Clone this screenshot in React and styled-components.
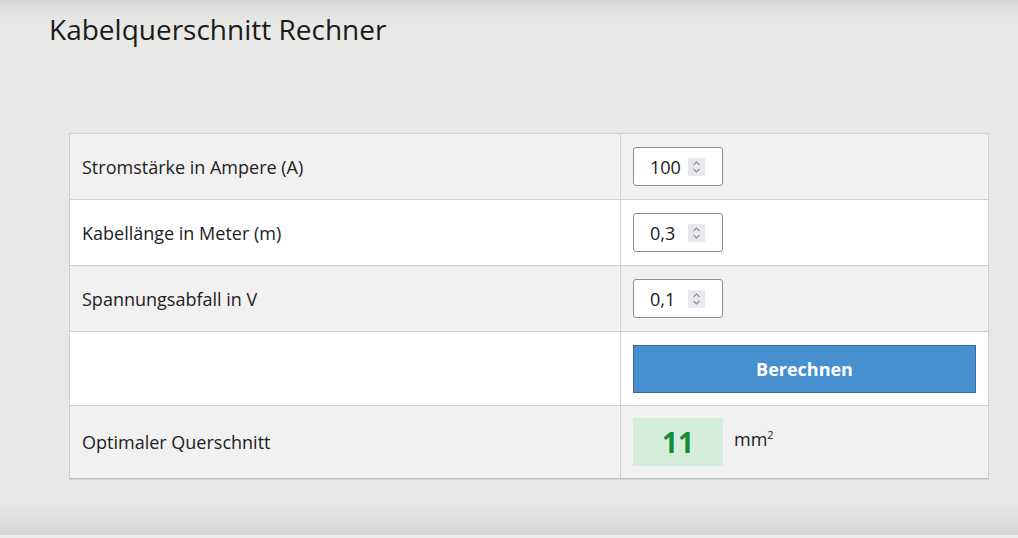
import React, { useState } from "react";
import styled, { createGlobalStyle } from "styled-components";

const GlobalStyle = createGlobalStyle`
  html, body {
    margin: 0;
    padding: 0;
    background: #ecedeb;
    font-family: "Open Sans", "Liberation Sans", sans-serif;
    color: #222;
  }
`;

const Page = styled.div`
  height: 535px;
  background: linear-gradient(
    to bottom,
    #d6d7d4 0px,
    #e5e6e3 14px,
    #e8e9e6 30px,
    #e8e9e6 500px,
    #e2e3e0 515px,
    #d5d5d5 535px
  );
  display: flex;
  flex-direction: column;
  box-sizing: border-box;
  padding: 10px 30px 0 49px;
`;

const Title = styled.h1`
  margin: 0;
  font-size: 28px;
  font-weight: 400;
  line-height: 38px;
  color: #1a1a1a;
`;

const Table = styled.div`
  margin: 85px 0 0 20px;
  width: 920px;
  box-sizing: border-box;
  border: 1px solid #cfcfcf;
  border-bottom-color: #bdbdbd;
  box-shadow: 0 1px 0 #d6d6d6;
  display: flex;
  flex-direction: column;
`;

const Row = styled.div`
  display: grid;
  grid-template-columns: 551px 1fr;
  background: ${(p) => (p.$shaded ? "#f1f1f1" : "#ffffff")};
  min-height: ${(p) => p.$height}px;
  & + & {
    border-top: 1px solid #d0d0d0;
  }
`;

const Label = styled.div`
  display: flex;
  align-items: center;
  padding: 0 12px;
  font-size: 18px;
  border-right: 1px solid #d0d0d0;
`;

const Value = styled.div`
  display: flex;
  align-items: center;
  padding: 0 12px;
  gap: 11px;
`;

const InputBox = styled.label`
  width: 90px;
  height: 39px;
  box-sizing: border-box;
  border: 1px solid #8f8b9e;
  border-radius: 3px;
  background: #fff;
  display: flex;
  align-items: center;
  padding: 0 16px 0 16px;
`;

const NumberInput = styled.input`
  border: none;
  outline: none;
  background: transparent;
  width: 38px;
  padding: 0;
  font-family: inherit;
  font-size: 18px;
  color: #1a1a1a;
`;

const Spinner = styled.span`
  width: 17px;
  height: 18px;
  background: #e9e8ed;
  display: flex;
  align-items: center;
  justify-content: center;
`;

const CalcButton = styled.button`
  width: 343px;
  height: 48px;
  background: #4690d0;
  border: 1px solid #3b6c99;
  color: #fff;
  font-family: inherit;
  font-size: 18px;
  font-weight: 700;
  cursor: pointer;
`;

const Result = styled.div`
  width: 90px;
  height: 48px;
  background: #d5eddc;
  color: #178a37;
  font-size: 28px;
  font-weight: 700;
  display: flex;
  align-items: center;
  justify-content: center;
`;

const Unit = styled.span`
  font-size: 18px;
  margin-top: -6px;
  sup {
    font-size: 11px;
  }
`;

const BottomStrip = styled.div`
  height: 3px;
  background: #ececec;
`;

function SpinIcon() {
  return (
    <Spinner>
      <svg width="9" height="14" viewBox="0 0 9 14">
        <path d="M1.5 5 L4.5 2 L7.5 5" fill="none" stroke="#8a8a90" strokeWidth="1.1" />
        <path d="M1.5 9 L4.5 12 L7.5 9" fill="none" stroke="#8a8a90" strokeWidth="1.1" />
      </svg>
    </Spinner>
  );
}

function NumberField({ value, onChange }) {
  return (
    <InputBox>
      <NumberInput type="text" value={value} onChange={(e) => onChange(e.target.value)} />
      <SpinIcon />
    </InputBox>
  );
}

export default function App() {
  const [current, setCurrent] = useState("100");
  const [length, setLength] = useState("0,3");
  const [drop, setDrop] = useState("0,1");
  const [result, setResult] = useState(11);

  const calc = () => {
    const i = parseFloat(current.replace(",", "."));
    const l = parseFloat(length.replace(",", "."));
    const u = parseFloat(drop.replace(",", "."));
    if (!i || !l || !u) return;
    // Kupfer, Hin- und Rückleiter
    setResult(Math.ceil((2 * l * i) / (56 * u)));
  };

  return (
    <>
      <GlobalStyle />
      <Page>
        <Title>Kabelquerschnitt Rechner</Title>
        <Table>
          <Row $shaded $height={65}>
            <Label>Stromstärke in Ampere (A)</Label>
            <Value>
              <NumberField value={current} onChange={setCurrent} />
            </Value>
          </Row>
          <Row $height={65}>
            <Label>Kabellänge in Meter (m)</Label>
            <Value>
              <NumberField value={length} onChange={setLength} />
            </Value>
          </Row>
          <Row $shaded $height={65}>
            <Label>Spannungsabfall in V</Label>
            <Value>
              <NumberField value={drop} onChange={setDrop} />
            </Value>
          </Row>
          <Row $height={73}>
            <Label />
            <Value>
              <CalcButton onClick={calc}>Berechnen</CalcButton>
            </Value>
          </Row>
          <Row $shaded $height={72}>
            <Label>Optimaler Querschnitt</Label>
            <Value>
              <Result>{result}</Result>
              <Unit>
                mm<sup>2</sup>
              </Unit>
            </Value>
          </Row>
        </Table>
      </Page>
      <BottomStrip />
    </>
  );
}
